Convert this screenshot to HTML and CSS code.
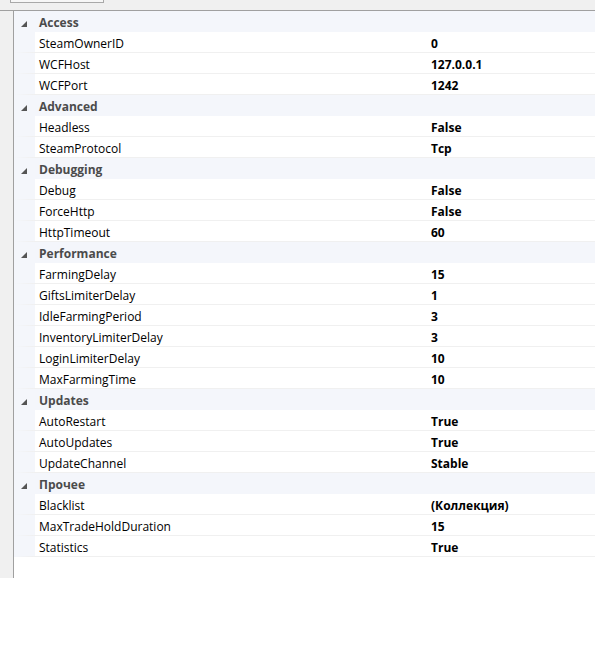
FILE: index.html
```html
<!DOCTYPE html>
<html>
<head>
  <title>Config</title>
  <link rel="stylesheet" href="styles.css">
</head>
<body>
  <div class="window">

    <div class="toolbar">
      <div class="tab"></div>
    </div>

    <div class="body">
      <div class="side"></div>

      <div class="grid">
        <div class="cat"><span class="glyph"></span>Access</div>
        <div class="row"><span class="name">SteamOwnerID</span><span class="value">0</span></div>
        <div class="row"><span class="name">WCFHost</span><span class="value">127.0.0.1</span></div>
        <div class="row"><span class="name">WCFPort</span><span class="value">1242</span></div>

        <div class="cat"><span class="glyph"></span>Advanced</div>
        <div class="row"><span class="name">Headless</span><span class="value">False</span></div>
        <div class="row"><span class="name">SteamProtocol</span><span class="value">Tcp</span></div>

        <div class="cat"><span class="glyph"></span>Debugging</div>
        <div class="row"><span class="name">Debug</span><span class="value">False</span></div>
        <div class="row"><span class="name">ForceHttp</span><span class="value">False</span></div>
        <div class="row"><span class="name">HttpTimeout</span><span class="value">60</span></div>

        <div class="cat"><span class="glyph"></span>Performance</div>
        <div class="row"><span class="name">FarmingDelay</span><span class="value">15</span></div>
        <div class="row"><span class="name">GiftsLimiterDelay</span><span class="value">1</span></div>
        <div class="row"><span class="name">IdleFarmingPeriod</span><span class="value">3</span></div>
        <div class="row"><span class="name">InventoryLimiterDelay</span><span class="value">3</span></div>
        <div class="row"><span class="name">LoginLimiterDelay</span><span class="value">10</span></div>
        <div class="row"><span class="name">MaxFarmingTime</span><span class="value">10</span></div>

        <div class="cat"><span class="glyph"></span>Updates</div>
        <div class="row"><span class="name">AutoRestart</span><span class="value">True</span></div>
        <div class="row"><span class="name">AutoUpdates</span><span class="value">True</span></div>
        <div class="row"><span class="name">UpdateChannel</span><span class="value">Stable</span></div>

        <div class="cat"><span class="glyph"></span>Прочее</div>
        <div class="row"><span class="name">Blacklist</span><span class="value">(Коллекция)</span></div>
        <div class="row"><span class="name">MaxTradeHoldDuration</span><span class="value">15</span></div>
        <div class="row"><span class="name">Statistics</span><span class="value">True</span></div>
      </div>
    </div>

  </div>
</body>
</html>
```

FILE: styles.css
```css
html, body{ margin: 0; padding: 0; background: #fff; }
body{ font-family: "Open Sans", "Noto Sans", sans-serif; font-size: 12px; color: #000; }

.window{ width: 595px; }

.toolbar{ height: 10px; background: #f0f0f0; border-bottom: 1px solid #a0a0a0; position: relative; }
.tab{ position: absolute; left: 10px; top: -2px; width: 92px; height: 4px; border: 1px solid #a9a9a9; border-top: 0; background: #f7f7f7; }

.body{ display: flex; height: 567px; }
.side{ width: 13px; background: #f0f0f0; border-right: 1px solid #a0a0a0; }

.grid{ flex: 1; align-self: flex-start; }

/* each line is 21px: 20px cell + 1px rule */
.cat, .row{ height: 20px; line-height: 24px; overflow: hidden; border-bottom: 1px solid #f0f0f0; display: flex; white-space: nowrap; }

.cat{ background: #f4f6fb; font-weight: bold; color: #4b4b4b; padding-left: 25px; position: relative; border-bottom-color: #f4f6fb; }
.glyph{ position: absolute; left: 7px; top: 10px; width: 0; height: 0; border-left: 6px solid transparent; border-bottom: 6px solid #555; }

.row{ border-left: 21px solid #f4f6fb; }
.name{ width: 392px; padding-left: 4px; }
.value{ font-weight: bold; }
```
